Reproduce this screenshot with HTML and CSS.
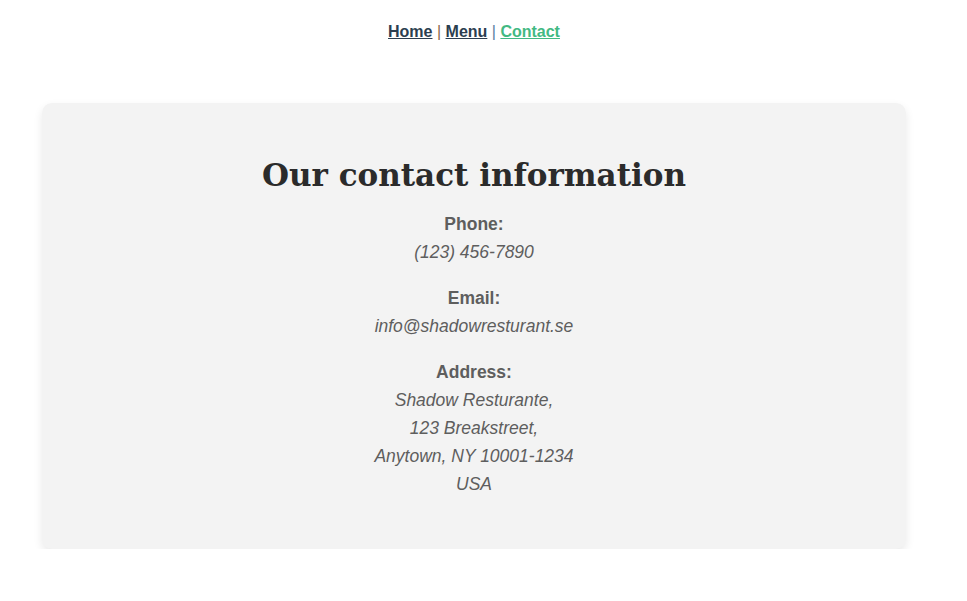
FILE: index.html
```html
<!DOCTYPE html>
<html lang="en">
<head>
<meta charset="utf-8">
<title>Contact</title>
<link rel="stylesheet" href="styles.css">
</head>
<body>
<div class="page">
  <nav class="nav">
    <a href="#" class="nav-link">Home</a> <span class="sep sep-a">|</span> <a href="#" class="nav-link">Menu</a> <span class="sep sep-b">|</span> <a href="#" class="nav-link active">Contact</a>
  </nav>
  <main class="card">
    <h1 class="title">Our contact information</h1>
    <div class="block">
      <div class="label">Phone:</div>
      <div class="value">(123) 456-7890</div>
    </div>
    <div class="block">
      <div class="label">Email:</div>
      <div class="value">info@shadowresturant.se</div>
    </div>
    <div class="block">
      <div class="label">Address:</div>
      <div class="value">Shadow Resturante,</div>
      <div class="value">123 Breakstreet,</div>
      <div class="value">Anytown, NY 10001-1234</div>
      <div class="value">USA</div>
    </div>
  </main>
</div>
</body>
</html>
```
FILE: styles.css
```css
html, body {
  margin: 0;
  padding: 0;
  background: #ffffff;
}
body {
  font-family: "Liberation Sans", Arial, sans-serif;
  color: #555555;
}
.page {
  width: 948px;
}
.nav {
  text-align: center;
  padding-top: 22px;
  font-size: 16px;
  line-height: 20px;
  font-weight: bold;
  color: #2c3e50;
}
.nav-link {
  color: #2c3e50;
  text-decoration: underline;
}
.nav-link.active {
  color: #42b983;
}
.sep {
  font-weight: normal;
}
.sep-a { color: #8a6a4a; }
.sep-b { color: #5a7ea0; }
.card {
  margin: 61px 42px 0 42px;
  background: #f3f3f3;
  border-radius: 10px;
  box-shadow: 0 4px 10px rgba(0, 0, 0, 0.09);
  padding: 52px 20px 51px;
  text-align: center;
}
.title {
  margin: 0 0 15px;
  font-family: "DejaVu Serif", Georgia, serif;
  font-size: 31px;
  line-height: 40px;
  font-weight: bold;
  color: #2b2b2b;
}
.block {
  margin-bottom: 18px;
}
.block:last-child {
  margin-bottom: 0;
}
.label {
  font-size: 17.5px;
  line-height: 28px;
  font-weight: bold;
  color: #5e5e5e;
}
.value {
  font-size: 17.5px;
  line-height: 28px;
  font-style: italic;
  color: #5e5e5e;
}
```
